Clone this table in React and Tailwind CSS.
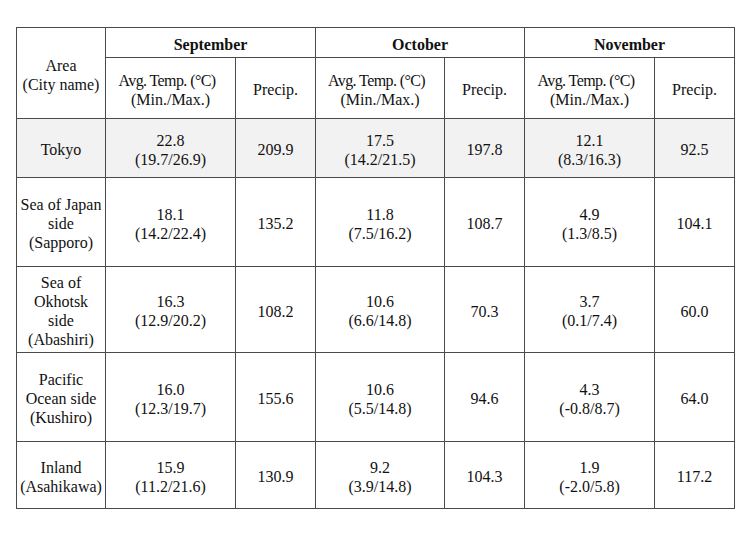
import React from "react";

const MONTHS = ["September", "October", "November"];

const ROWS = [
  {
    area: ["Tokyo"],
    data: [
      ["22.8", "(19.7/26.9)", "209.9"],
      ["17.5", "(14.2/21.5)", "197.8"],
      ["12.1", "(8.3/16.3)", "92.5"],
    ],
    shade: true,
    h: "h-[59px]",
  },
  {
    area: ["Sea of Japan", "side", "(Sapporo)"],
    data: [
      ["18.1", "(14.2/22.4)", "135.2"],
      ["11.8", "(7.5/16.2)", "108.7"],
      ["4.9", "(1.3/8.5)", "104.1"],
    ],
    h: "h-[89px]",
  },
  {
    area: ["Sea of", "Okhotsk", "side", "(Abashiri)"],
    data: [
      ["16.3", "(12.9/20.2)", "108.2"],
      ["10.6", "(6.6/14.8)", "70.3"],
      ["3.7", "(0.1/7.4)", "60.0"],
    ],
    h: "h-[86px]",
  },
  {
    area: ["Pacific", "Ocean side", "(Kushiro)"],
    data: [
      ["16.0", "(12.3/19.7)", "155.6"],
      ["10.6", "(5.5/14.8)", "94.6"],
      ["4.3", "(-0.8/8.7)", "64.0"],
    ],
    h: "h-[89px]",
  },
  {
    area: ["Inland", "(Asahikawa)"],
    data: [
      ["15.9", "(11.2/21.6)", "130.9"],
      ["9.2", "(3.9/14.8)", "104.3"],
      ["1.9", "(-2.0/5.8)", "117.2"],
    ],
    h: "h-[67px]",
  },
];

// shared cell look: thin dark rule, centred text
const cell = "border border-[#4a4a4a] text-center align-middle px-0 pb-0 pt-[3px]";

export default function App() {
  return (
    <div className="w-[750px] h-[536px] bg-white pt-[27px] pl-[16px] font-['Liberation_Serif',serif] text-[16px] leading-[19px] text-[#111]">
      <table className="border-collapse table-fixed w-[718px]">
        <colgroup>
          <col className="w-[89px]" />
          <col className="w-[130px]" />
          <col className="w-[80px]" />
          <col className="w-[129px]" />
          <col className="w-[80px]" />
          <col className="w-[130px]" />
          <col className="w-[80px]" />
        </colgroup>
        <thead>
          <tr className="h-[30px]">
            <th rowSpan={2} className={`${cell} font-normal`}>
              Area
              <br />
              (City name)
            </th>
            {MONTHS.map((m) => (
              <th key={m} colSpan={2} className={`${cell} font-bold`}>
                {m}
              </th>
            ))}
          </tr>
          <tr className="h-[61px]">
            {MONTHS.map((m) => (
              <React.Fragment key={m}>
                <th className={`${cell} font-normal`}>
                  <span className="tracking-[-0.6px] pr-[7px]">Avg. Temp. (°C)</span>
                  <br />
                  (Min./Max.)
                </th>
                <th className={`${cell} font-normal`}>Precip.</th>
              </React.Fragment>
            ))}
          </tr>
        </thead>
        <tbody>
          {ROWS.map((row) => (
            <tr key={row.area.join(" ")} className={`${row.h} ${row.shade ? "bg-[#f2f2f2]" : ""}`}>
              <td className={cell}>
                {row.area.map((line) => (
                  <div key={line}>{line}</div>
                ))}
              </td>
              {row.data.map(([avg, range, precip], i) => (
                <React.Fragment key={i}>
                  <td className={cell}>
                    <div>{avg}</div>
                    <div>{range}</div>
                  </td>
                  <td className={cell}>{precip}</td>
                </React.Fragment>
              ))}
            </tr>
          ))}
        </tbody>
      </table>
    </div>
  );
}
